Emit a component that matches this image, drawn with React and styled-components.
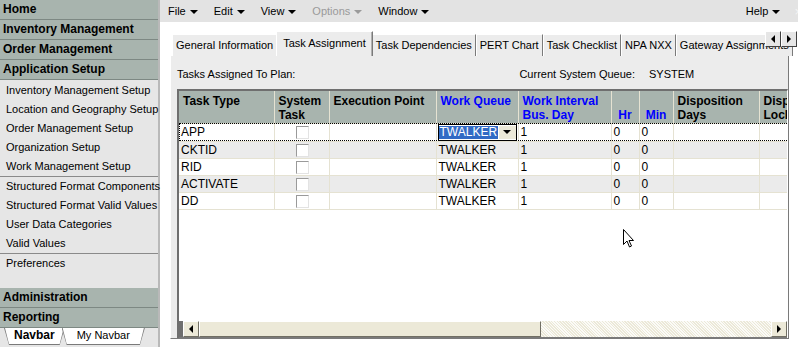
import React from 'react';
import styled, {createGlobalStyle} from "styled-components";

const GlobalStyle = createGlobalStyle`
  html, body {
    margin: 0;
    padding: 0;
    background: #ffffff;
  }
  body {
    font-family: "Liberation Sans", Arial, sans-serif;
    font-size: 11px;
    color: #000;
  }
`

const sections = ['Home', 'Inventory Management', 'Order Management', 'Application Setup']
const setupGroups = [
    ['Inventory Management Setup', 'Location and Geography Setup', 'Order Management Setup', 'Organization Setup', 'Work Management Setup'],
    ['Structured Format Components', 'Structured Format Valid Values', 'User Data Categories', 'Valid Values'],
    ['Preferences'],
]
const menus = [
    {label: 'File'}, {label: 'Edit'}, {label: 'View'}, {label: 'Options', disabled: true}, {label: 'Window'},
]
const tabs = ['General Information', 'Task Assignment', 'Task Dependencies', 'PERT Chart', 'Task Checklist', 'NPA NXX', 'Gateway Assignments']
const columns = [
    {title: 'Task Type', width: 95},
    {title: 'System\nTask', width: 55},
    {title: 'Execution Point', width: 107},
    {title: 'Work Queue', width: 82, blue: true},
    {title: 'Work Interval\nBus. Day', width: 93, blue: true},
    {title: 'Hr', width: 28, blue: true, bottom: true},
    {title: 'Min', width: 34, blue: true, bottom: true},
    {title: 'Disposition\nDays', width: 86},
    {title: 'Disposition\nLock', width: 60},
]
const rows = ['APP', 'CKTID', 'RID', 'ACTIVATE', 'DD']

function Arrow({color}) {
    return <Caret $color={color}/>
}

function Sidebar() {
    return (
        <SideNav>
            {sections.map(s => <SectionHeader key={s}>{s}</SectionHeader>)}
            <SetupList>
                {setupGroups.map((group, i) => (
                    <SetupGroup key={i} $last={i === setupGroups.length - 1}>
                        {group.map(item => <SetupItem key={item}>{item}</SetupItem>)}
                    </SetupGroup>
                ))}
            </SetupList>
            <SectionHeader>Administration</SectionHeader>
            <SectionHeader>Reporting</SectionHeader>
            <NavTabs>
                <NavTab $active><span>Navbar</span></NavTab>
                <NavTab><span>My Navbar</span></NavTab>
            </NavTabs>
        </SideNav>
    )
}

function Grid() {
    return (
        <GridBox>
            <GridTable>
                <colgroup>
                    {columns.map(c => <col key={c.title} style={{width: c.width}}/>)}
                </colgroup>
                <thead>
                <tr>
                    {columns.map(c => (
                        <HeadCell key={c.title} $blue={c.blue} $bottom={c.bottom}>{c.title}</HeadCell>
                    ))}
                </tr>
                </thead>
                <tbody>
                {rows.map((r, i) => (
                    <Row key={r} $alt={i % 2 === 1} $focus={i === 0}>
                        <Cell>{r}</Cell>
                        <Cell $center><Check/></Cell>
                        <Cell/>
                        <Cell>
                            {i === 0 ? (
                                <Editor>
                                    <Selected>TWALKER</Selected>
                                    <DropButton><Caret $color="#000"/></DropButton>
                                </Editor>
                            ) : 'TWALKER'}
                        </Cell>
                        <Cell>1</Cell>
                        <Cell>0</Cell>
                        <Cell>0</Cell>
                        <Cell/>
                        <Cell/>
                    </Row>
                ))}
                </tbody>
            </GridTable>
            <Filler/>
            <HScroll>
                <ScrollButton><TriLeft/></ScrollButton>
                <Thumb/>
                <Track/>
                <ScrollButton><TriRight/></ScrollButton>
            </HScroll>
        </GridBox>
    )
}

function App() {
    return (
        <Screen>
            <GlobalStyle/>
            <Sidebar/>
            <Main>
                <MenuBar>
                    {menus.map(m => (
                        <MenuItem key={m.label} $disabled={m.disabled}>
                            {m.label}<Arrow color={m.disabled ? '#9a9a9a' : '#000'}/>
                        </MenuItem>
                    ))}
                    <MenuSpacer/>
                    <MenuItem>Help<Arrow color="#000"/></MenuItem>
                    <CloseMark>×</CloseMark>
                </MenuBar>
                <Workspace>
                    <TabStrip>
                        {tabs.map(t => (
                            <Tab key={t} $active={t === 'Task Assignment'}>{t}</Tab>
                        ))}
                        <TabScroll>
                            <SmallButton><TriLeft/></SmallButton>
                            <SmallButton><TriRight/></SmallButton>
                        </TabScroll>
                    </TabStrip>
                    <Panel>
                        <InfoRow>
                            <span>Tasks Assigned To Plan:</span>
                            <QueueLabel>Current System Queue:</QueueLabel>
                            <span>SYSTEM</span>
                        </InfoRow>
                        <Grid/>
                    </Panel>
                </Workspace>
                <Pointer viewBox="0 0 12 20" width="12" height="20">
                    <path d="M0.5 0.5 L0.5 15.5 L4 12 L6.5 18 L8.5 17 L6 11.5 L10.5 11.5 Z" fill="#fff" stroke="#000" strokeWidth="1"/>
                </Pointer>
            </Main>
        </Screen>
    );
}

export default App;


const Screen = styled.div`
  width: 798px;
  height: 347px;
  display: flex;
  overflow: hidden;
  position: relative;
`

const SideNav = styled.div`
  width: 158px;
  flex: none;
  display: flex;
  flex-direction: column;
  background: #e6e6e6;
  border-right: 2px solid #b9b9b9;
`

const SectionHeader = styled.div`
  height: 19px;
  line-height: 19px;
  padding-left: 3px;
  background: #a8b4ae;
  border-bottom: 1px solid #7d8883;
  font-weight: bold;
  font-size: 12px;
  white-space: nowrap;
`

const SetupList = styled.div`
  flex: 1;
  display: flex;
  flex-direction: column;
  padding-top: 1px;
`

const SetupGroup = styled.div`
  display: flex;
  flex-direction: column;
  border-bottom: ${p => p.$last ? 'none' : '1px solid #8a8a8a'};
`

const SetupItem = styled.div`
  height: 19px;
  line-height: 19px;
  padding-left: 6px;
  white-space: nowrap;
`

const NavTabs = styled.div`
  height: 19px;
  display: flex;
  align-items: flex-start;
  padding-left: 4px;
  background: #e6e6e6;
`

const NavTab = styled.div`
  background: #7a7a7a;
  height: 16px;
  padding: 0 0 1px 0;
  margin-right: -3px;
  clip-path: polygon(0 0, 100% 0, calc(100% - 5px) 100%, 5px 100%);

  > span {
    display: block;
    height: 16px;
    line-height: 15px;
    padding: ${p => p.$active ? '0 10px' : '0 15px'};
    background: #fff;
    font-weight: ${p => p.$active ? 'bold' : 'normal'};
    font-size: ${p => p.$active ? '12px' : '11px'};
    clip-path: polygon(1px 0, calc(100% - 1px) 0, calc(100% - 5px) 100%, 5px 100%);
  }
`

const Main = styled.div`
  flex: 1;
  display: flex;
  flex-direction: column;
  position: relative;
  min-width: 0;
`

const MenuBar = styled.div`
  height: 22px;
  background: #e3e3e3;
  display: flex;
  align-items: center;
  padding-left: 8px;
`

const MenuItem = styled.div`
  display: flex;
  align-items: center;
  margin-right: 16px;
  color: ${p => p.$disabled ? '#9a9a9a' : '#000'};
`

const Caret = styled.span`
  display: inline-block;
  width: 0;
  height: 0;
  margin-left: 4px;
  margin-top: 2px;
  border-left: 4px solid transparent;
  border-right: 4px solid transparent;
  border-top: 4px solid ${p => p.$color};
`

const MenuSpacer = styled.div`
  flex: 1;
`

const CloseMark = styled.span`
  color: #f4f4f4;
  font-size: 13px;
  margin-right: -4px;
  margin-left: -2px;
`

const Workspace = styled.div`
  flex: 1;
  padding: 9px 0 8px 10px;
  display: flex;
  flex-direction: column;
  min-height: 0;
`

const TabStrip = styled.div`
  height: 25px;
  display: flex;
  align-items: flex-end;
  position: relative;
  padding-left: 2px;
  overflow: hidden;
`

const Tab = styled.div`
  height: ${p => p.$active ? '25px' : '21px'};
  line-height: ${p => p.$active ? '23px' : '21px'};
  padding: ${p => p.$active ? '0 6px' : '0 3px'};
  margin: ${p => p.$active ? '0 -1px' : '0'};
  background: #ececec;
  border-top: 1px solid #fff;
  border-left: 1px solid #fff;
  border-right: 1px solid #7a7a7a;
  box-shadow: ${p => p.$active ? 'inset -1px 0 #b0b0b0' : 'none'};
  white-space: nowrap;
  position: relative;
  z-index: ${p => p.$active ? 2 : 1};
  margin-bottom: ${p => p.$active ? '-1px' : '0'};
`

const TabScroll = styled.div`
  position: absolute;
  right: 1px;
  top: 0;
  display: flex;
  z-index: 3;
`

const SmallButton = styled.div`
  width: 16px;
  height: 16px;
  background: #e6e6e6;
  border-top: 1px solid #fff;
  border-left: 1px solid #fff;
  border-right: 1px solid #404040;
  border-bottom: 1px solid #404040;
  box-sizing: border-box;
  display: flex;
  align-items: center;
  justify-content: center;
`

const TriLeft = styled.span`
  width: 0;
  height: 0;
  border-top: 4px solid transparent;
  border-bottom: 4px solid transparent;
  border-right: 4px solid #000;
`

const TriRight = styled.span`
  width: 0;
  height: 0;
  border-top: 4px solid transparent;
  border-bottom: 4px solid transparent;
  border-left: 4px solid #000;
`

const Panel = styled.div`
  flex: 1;
  background: #ececec;
  border-left: 1px solid #fff;
  border-right: 1px solid #7a7a7a;
  border-bottom: 1px solid #7a7a7a;
  margin-right: 9px;
  padding: 8px 0 0 6px;
  display: flex;
  flex-direction: column;
  min-height: 0;
`

const InfoRow = styled.div`
  height: 19px;
  display: flex;
  align-items: center;
  margin-bottom: 6px;
`

const QueueLabel = styled.span`
  margin-left: 224px;
  margin-right: 14px;
`

const GridBox = styled.div`
  flex: 1;
  display: flex;
  flex-direction: column;
  background: #fff;
  border-top: 2px solid #6f6f6f;
  border-left: 2px solid #6f6f6f;
  border-right: 1px solid #fff;
  overflow: hidden;
  min-height: 0;
`

const GridTable = styled.table`
  border-collapse: collapse;
  table-layout: fixed;
  width: 640px;
  font-size: 12px;
`

const HeadCell = styled.th`
  background: #a8b4ae;
  height: 32px;
  box-sizing: border-box;
  padding: ${p => p.$bottom ? '0 0 1px 0' : '3px 4px 0 4px'};
  text-align: ${p => p.$bottom ? 'center' : 'left'};
  vertical-align: ${p => p.$bottom ? 'bottom' : 'top'};
  color: ${p => p.$blue ? '#0000ff' : '#000'};
  font-weight: bold;
  font-size: 12px;
  line-height: 14px;
  white-space: pre;
  overflow: hidden;
  border-right: 1px solid #e5e2d2;
  border-bottom: 1px solid #e5e2d2;
`

const Row = styled.tr`
  background: ${p => p.$alt ? '#ebebeb' : '#fff'};
  outline: ${p => p.$focus ? '1px dotted #000' : 'none'};
  outline-offset: -1px;
`

const Cell = styled.td`
  height: 16px;
  padding: 0 0 0 2px;
  line-height: 16px;
  border-right: 1px solid #e5e2d2;
  border-bottom: 1px solid #e5e2d2;
  text-align: ${p => p.$center ? 'center' : 'left'};
  white-space: nowrap;
  overflow: hidden;
`

const Check = styled.span`
  display: inline-block;
  vertical-align: middle;
  width: 11px;
  height: 11px;
  background: #fff;
  border-top: 1px solid #9a9a9a;
  border-left: 1px solid #9a9a9a;
  border-right: 1px solid #e3e3e3;
  border-bottom: 1px solid #e3e3e3;
`

const Editor = styled.div`
  display: flex;
  align-items: center;
  height: 15px;
  border: 1px solid #000;
  margin-left: -1px;
  margin-right: 1px;
`

const Selected = styled.span`
  flex: 1;
  background: #316ac5;
  color: #fff;
  line-height: 13px;
  padding-left: 1px;
`

const DropButton = styled.span`
  width: 17px;
  height: 13px;
  background: #ece9d8;
  border-left: 1px solid #fff;
  display: flex;
  align-items: center;
  justify-content: center;

  > span {
    margin: 0;
  }
`

const Filler = styled.div`
  flex: 1;
`

const HScroll = styled.div`
  height: 16px;
  display: flex;
  background: #6f6f6f;
  padding-left: 4px;
  border-bottom: 1px solid #7a7a7a;
`

const ScrollButton = styled.div`
  width: 16px;
  height: 16px;
  box-sizing: border-box;
  background: #ece9d8;
  border-top: 1px solid #fff;
  border-left: 1px solid #fff;
  border-right: 1px solid #716f64;
  border-bottom: 1px solid #716f64;
  display: flex;
  align-items: center;
  justify-content: center;
`

const Thumb = styled.div`
  width: 342px;
  background: #ece9d8;
  border-top: 1px solid #fff;
  border-left: 1px solid #fff;
  border-right: 1px solid #716f64;
  border-bottom: 1px solid #716f64;
  box-sizing: border-box;
`

const Track = styled.div`
  flex: 1;
  background-color: #f5f4ee;
  background-image: repeating-linear-gradient(45deg, #ece9d8 0 1px, #fbfbf8 1px 2px);
`

const Pointer = styled.svg`
  position: absolute;
  left: 463px;
  top: 229px;
`
